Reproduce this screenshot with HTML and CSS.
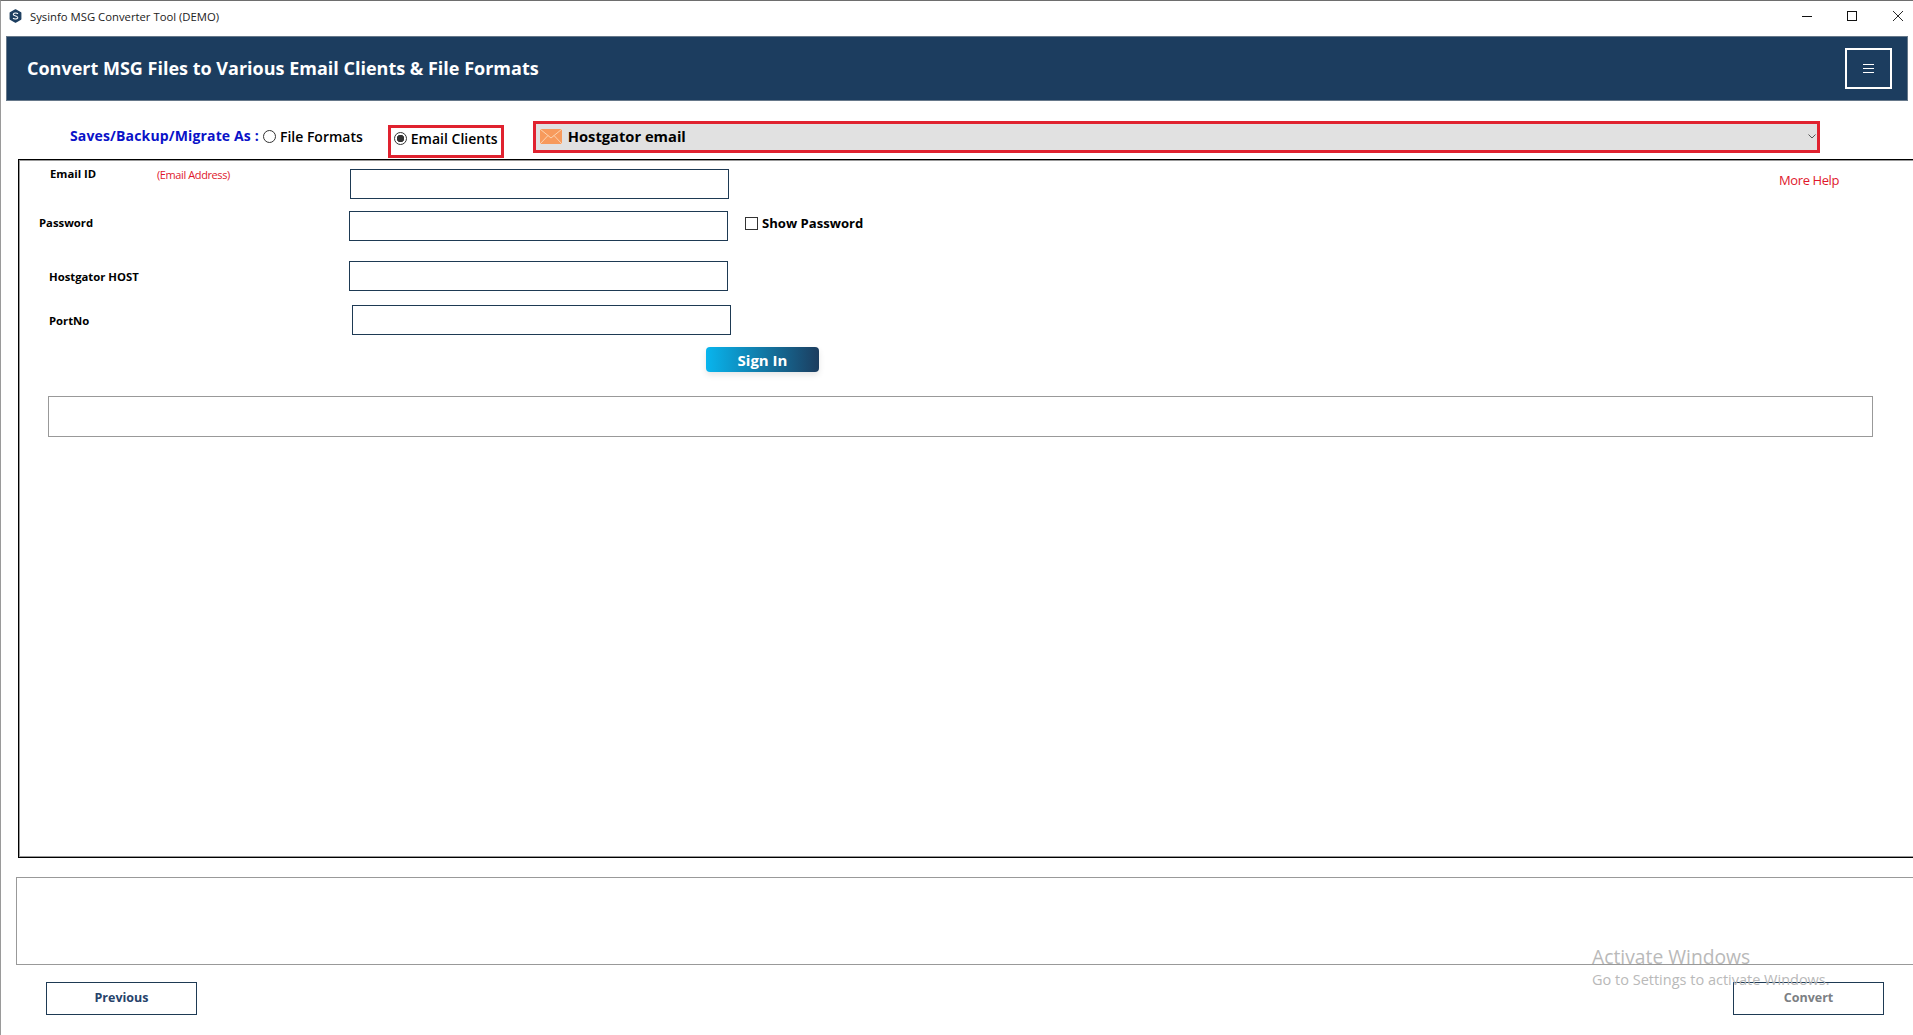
FILE: index.html
```html
<!DOCTYPE html>
<html lang="en">
<head>
<meta charset="utf-8">
<title>Sysinfo MSG Converter Tool (DEMO)</title>
<link rel="stylesheet" href="styles.css">
</head>
<body>
<div class="window">
  <div class="titlebar">
    <svg class="logo" viewBox="1 0 14 16"><path d="M8 1 14 4.500v7L8 15 2 11.500v-7z" fill="#1c3d5f" stroke="#1c3d5f" stroke-width="1.500" stroke-linejoin="round"/><path d="M10.800 5.600C10 4.400 6.300 4.200 5.600 5.800 5.100 7.100 6.700 7.500 8 8s3 1 2.500 2.300C9.800 11.800 6 11.600 5.200 10.400" fill="none" stroke="#fff" stroke-width="1.200"/></svg>
    <span class="title-text">Sysinfo MSG Converter Tool (DEMO)</span>
    <div class="win-controls">
      <svg class="win-icon win-min" viewBox="0 0 10 10"><path d="M0 5.500h10" stroke="#111" stroke-width="1"/></svg>
      <svg class="win-icon" viewBox="0 0 10 10"><rect x=".5" y=".5" width="9" height="9" fill="none" stroke="#111"/></svg>
      <svg class="win-icon" viewBox="0 0 10 10"><path d="M0 0l10 10M10 0L0 10" stroke="#111" stroke-width=".9"/></svg>
    </div>
  </div>
  <header class="banner">
    <h1 class="banner-title">Convert MSG Files to Various Email Clients &amp; File Formats</h1>
    <button class="menu-btn"><svg class="menu-icon" viewBox="0 0 11 9"><path d="M0 .5h11M0 4.500h11M0 8.500h11" stroke="#fff" stroke-width="1"/></svg></button>
  </header>
  <div class="mode-row">
    <span class="mode-label">Saves/Backup/Migrate As :</span>
    <label class="radio-item"><span class="radio"></span>File Formats</label>
    <label class="radio-item radio-boxed"><span class="radio radio-on"></span>Email Clients</label>
    <div class="select">
      <svg class="envelope" viewBox="0 0 22 15"><rect width="22" height="15" fill="#f79a5c"/><path d="M0 0l11 9L22 0M0 15l8-8.500M22 15l-8-8.500" fill="none" stroke="#fbd3b0" stroke-width="1"/></svg>
      <span class="select-text">Hostgator email</span>
      <svg class="chevron" viewBox="0 0 8 5"><path d="M.5.5L4 4 7.500.5" fill="none" stroke="#555" stroke-width="1"/></svg>
    </div>
  </div>
  <section class="panel">
    <div class="form">
      <div class="field field-email">
        <span class="label label-email">Email ID</span><span class="hint">(Email Address)</span>
        <span class="input"></span>
      </div>
      <div class="field field-password">
        <span class="label label-password">Password</span>
        <span class="input"></span>
        <label class="show-pass"><span class="checkbox"></span>Show Password</label>
      </div>
      <div class="field field-host">
        <span class="label label-host">Hostgator HOST</span>
        <span class="input"></span>
      </div>
      <div class="field field-port">
        <span class="label label-port">PortNo</span>
        <span class="input"></span>
      </div>
      <button class="signin">Sign In</button>
      <div class="status-box"></div>
    </div>
    <a class="more-help">More Help</a>
  </section>
  <div class="log-box"></div>
  <div class="actions">
    <button class="action-btn">Previous</button>
    <button class="action-btn action-convert">Convert</button>
  </div>
  <div class="watermark">
    <div class="wm-title">Activate Windows</div>
    <div class="wm-sub">Go to Settings to activate Windows.</div>
  </div>
</div>
</body>
</html>
```
FILE: styles.css
```css
* { box-sizing: border-box; }
html, body { margin: 0; overflow: hidden; background: #fff; }
.window {
  position: relative;
  width: 1913px;
  height: 1035px;
  overflow: hidden;
  border-top: 1px solid #6e6e6e;
  border-left: 1px solid #9a9a9a;
  font-family: "Open Sans", sans-serif;
  color: #000;
}
.titlebar { display: flex; align-items: center; height: 35px; padding: 0 0 5px 8px; }
.logo { width: 13px; height: 14px; }
.title-text { margin-left: 8px; font: 11.300px "Open Sans", sans-serif; color: #222; }
.win-controls { display: flex; margin-left: auto; gap: 36px; padding-right: 10px; }
.win-icon { width: 10px; height: 10px; display: block; }
.win-min { margin-right: -1px; }
.banner {
  display: flex; align-items: center; justify-content: space-between;
  width: 1902px; height: 65px; margin-left: 5px; padding: 0 15px 0 20px;
  background: #1c3d5f; border: 1px solid #66788a;
}
.banner-title { margin: 0 0 2px; font: 700 18px "Open Sans", sans-serif; color: #fff; }
.menu-btn {
  display: flex; align-items: center; justify-content: center;
  width: 47px; height: 41px; padding: 0;
  background: transparent; border: 2px solid #fff;
}
.menu-icon { width: 11px; height: 9px; }
.mode-row { display: flex; align-items: flex-start; height: 58px; padding: 20px 0 0 69px; }
.mode-label { margin-top: 5px; font: 700 14px "Open Sans", sans-serif; letter-spacing: .15px; color: #0a12c8; }
.radio-item { display: flex; align-items: center; height: 19px; margin: 6px 0 0 4px; font: 600 14px "Open Sans", sans-serif; }
.radio { width: 13px; height: 13px; margin-right: 4px; border: 1px solid #333; border-radius: 50%; background: #fff; }
.radio-on { background: radial-gradient(circle, #333 0 3.500px, #fff 4px); }
.radio-boxed {
  width: 116px; height: 33px; margin: 4px 0 0 25px; padding: 0 0 6px 3px;
  border: 3px solid #e0222f;
}
.select {
  display: flex; align-items: center;
  width: 1287px; height: 32px; margin-left: 29px; padding: 0 1px 2px 4px;
  background: #e1e1e1; border: 3px solid #e0222f;
}
.envelope { width: 22px; height: 15px; }
.select-text { margin-left: 6px; font: 700 14.700px "Open Sans", sans-serif; }
.chevron { width: 8px; height: 5px; margin-left: auto; }
.panel {
  position: relative;
  width: 1950px; height: 699px; margin-left: 17px;
  border: 1px solid #000;
  box-shadow: inset 1px 1px 0 #999, inset -1px -1px 0 #999;
}
.form { display: flex; flex-direction: column; padding-top: 9px; }
.field { position: relative; display: flex; align-items: flex-start; height: 30px; }
.field-email { padding-left: 331px; }
.field-password { margin-top: 12px; padding-left: 330px; }
.field-host { margin-top: 20px; padding-left: 330px; }
.field-port { margin-top: 14px; padding-left: 333px; }
.input { width: 379px; height: 30px; border: 1px solid #1e3a54; background: #fff; }
.label { position: absolute; font: 700 11.300px "Open Sans", sans-serif; color: #000; }
.label-email { left: 31px; top: -3px; }
.label-password { left: 20px; top: 4px; }
.label-host { left: 30px; top: 8px; }
.label-port { left: 30px; top: 8px; }
.hint { position: absolute; left: 138px; top: -2px; font: 11px "Open Sans", sans-serif; letter-spacing: -0.4px; color: #e0182c; }
.show-pass { display: flex; align-items: center; height: 16px; margin: 4px 0 0 17px; font: 700 13.100px "Open Sans", sans-serif; }
.checkbox { width: 13px; height: 13px; margin-right: 4px; border: 1px solid #333; background: #fff; }
.signin {
  width: 113px; height: 25px; margin: 12px 0 0 687px; padding: 0;
  border: 0; border-radius: 4px;
  background: linear-gradient(90deg, #08b5ee, #1c3d5f);
  box-shadow: 0 3px 6px rgba(0,0,0,.1);
  font: 700 15px "Open Sans", sans-serif; color: #fff;
}
.status-box { width: 1825px; height: 41px; margin: 24px 0 0 29px; border: 1px solid #999; }
.more-help { position: absolute; left: 1760px; top: 11px; font: 13px "Open Sans", sans-serif; letter-spacing: -0.4px; color: #e0182c; }
.log-box { width: 1950px; height: 88px; margin: 19px 0 0 15px; border: 1px solid #999; }
.actions { display: flex; justify-content: space-between; width: 1838px; margin: 17px 0 0 45px; }
.action-btn {
  width: 151px; height: 33px; padding: 0 0 2px;
  background: #fff; border: 1px solid #1e3a54;
  font: 700 12.500px "Open Sans", sans-serif; color: #27436b;
}
.action-convert { color: #7c8084; }
.watermark { position: absolute; left: 1591px; top: 942px; color: #b9b9b9; font-family: "Open Sans", sans-serif; pointer-events: none; }
.wm-title { font-size: 19.300px; line-height: 27px; }
.wm-sub { font-size: 14.500px; line-height: 20px; }
```
